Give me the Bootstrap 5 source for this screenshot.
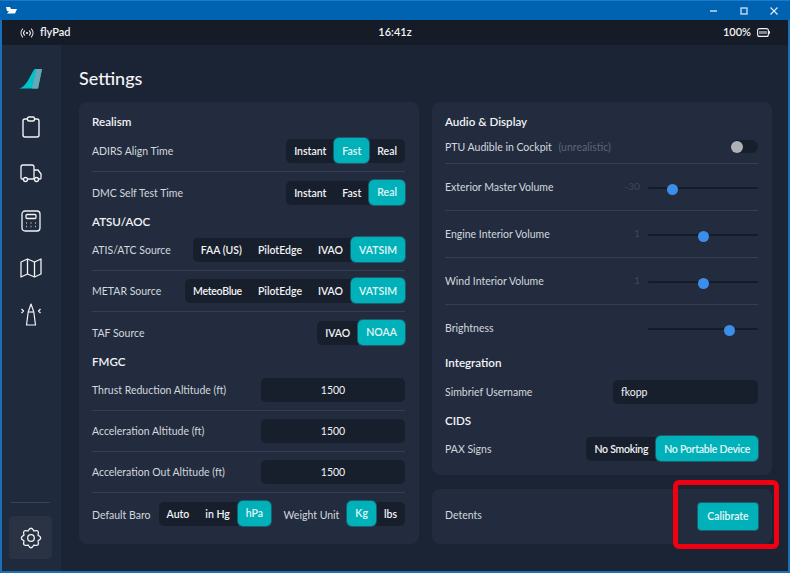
<!DOCTYPE html>
<html lang="en">
<head>
<meta charset="UTF-8">
<title>flyPad Settings</title>
<link href="https://cdn.jsdelivr.net/npm/bootstrap@5.3.0/dist/css/bootstrap.min.css" rel="stylesheet">
<style>
html, body { margin: 0; background: #1b2434; }
body { font-family: "Lato", "Liberation Sans", sans-serif; font-size: 10.5px; color: #d3d7de; overflow: hidden; }
.app-window { width: 790px; height: 573px; border: solid #1a6fb8; border-width: 0 2px 2px 2px; position: relative; }
.title-bar { height: 20px; background: #0063b1; border-top: 1px solid #1c7ac9; margin: 0 -2px; padding: 0 1px 0 6px; }
.win-btn { width: 30px; text-align: center; line-height: 0; }
.status-bar { height: 25px; background: #151b27; padding: 0 18px; color: #f2f3f5; font-size: 11px; font-weight: 600; }
.status-side { width: 200px; gap: 6px; }
.app-body { height: 526px; }
.side-rail { width: 59px; background: #1f2a3c; padding: 23px 2px 0 0; }
.rail-icon { height: 47px; }
.rail-logo { height: 35px; }
.rail-rule { width: 39px; height: 1px; background: #364153; margin-bottom: 13px; }
.rail-tile { width: 43px; height: 43px; background: #293344; border-radius: 4px; margin-bottom: 12px; }
.main-area { padding: 22px 16px 0 18px; }
.page-title { font-size: 18px; font-weight: 500; color: #f4f5f7; margin: 0; line-height: 22px; height: 35px; }
.panel { background: #222c3e; border-radius: 8px; width: 340px; padding: 0 14px 0 13px; }
.panel-left { height: 442px; padding-top: 10px; }
.panel-right { height: 373px; padding-top: 10px; }
.panel-detents { height: 55px; padding-right: 13px; }
.sect-title { font-size: 11.6px; font-weight: 600; color: #f2f3f5; margin: 0; line-height: 1; }
.sect-first { height: 19px; padding-top: 4px; }
.sect-next { height: 17px; padding-top: 3px; }
.set-row { height: 41px; }
.set-line { border-bottom: 1px solid #343f51; }
.audio-row { height: 47px; padding-bottom: 1px; }
.ptu-row { height: 33px; padding-bottom: 1px; }
.cids-row { height: 40px; }
.simbrief-row { height: 41px; }
.integration-head { margin-top: 2px; }
.set-row > span, .audio-row > span, .ptu-row > span:first-child, .simbrief-row > span, .cids-row > span { margin-top: 2px; }
.dim-note { color: #5c6677; }
.seg-group { background: #171e2c; border-radius: 5px; height: 24px; }
.seg-group .btn { font-size: 10.5px; font-weight: 600; color: #f2f3f5; padding: 0 8px; height: 24px; line-height: 24px; border: 0; border-radius: 5px; }
.seg-group .seg-on { background: #00b1b9; color: #e4f7f8; height: 25px; margin-top: -1px; box-shadow: 0 0 0 1px #1a5f6e; }
.seg-group .seg-tight { letter-spacing: -.25px; }
.value-box { background: #171e2c; border: 0; border-radius: 5px; width: 144px; height: 24px; padding: 0 8px; font-size: 10.5px; font-weight: 400; color: #f2f3f5; box-shadow: none; }
.value-box:focus { background: #171e2c; color: #f2f3f5; box-shadow: none; }
.simbrief-row .value-box { width: 145px; }
.slide-value { width: 30px; text-align: right; color: #3d4759; margin-right: 8px; font-size: 10.4px; }
.slide-input { width: 110px; height: 16px; display: block; margin-top: 2px; }
.slide-input::-webkit-slider-runnable-track { height: 2px; background: #151b27; border-radius: 1px; }
.slide-input::-webkit-slider-thumb { width: 11px; height: 11px; margin-top: -3px; background: #3b8eea; border: 0; border-radius: 50%; box-shadow: none; }
.toggle-track { width: 27px; height: 13px; background: #171e2c; border-radius: 7px; }
.toggle-knob { width: 12px; height: 12px; background: #aeb1b8; border-radius: 50%; }
.cal-btn { background: #00b1b9; color: #e8f8f9; font-size: 10.4px; font-weight: 600; width: 62px; height: 29px; padding: 0; border: 1px solid #1a5f6e; border-radius: 4px; }
.detents-name { margin-top: -1px; }
.red-mark { position: absolute; left: 671px; top: 480px; width: 106px; height: 69px; border: 5px solid #f00010; border-radius: 6px; pointer-events: none; }
</style>
</head>
<body>
<div class="app-window">

  <div class="title-bar d-flex align-items-center justify-content-between">
    <svg width="11" height="7" viewBox="0 0 11 7"><path d="M0 0h4l1 2h6L9 6.500H1L3 4H1z" fill="#fff"/></svg>
    <div class="d-flex">
      <span class="win-btn"><svg width="8" height="8" viewBox="0 0 8 8"><path d="M0 4h7" stroke="#cfe3f5" stroke-width="1.4"/></svg></span>
      <span class="win-btn"><svg width="8" height="8" viewBox="0 0 8 8"><rect x="1" y="1" width="6" height="6" fill="none" stroke="#cfe3f5" stroke-width="1.3"/></svg></span>
      <span class="win-btn"><svg width="8" height="8" viewBox="0 0 8 8"><path d="M.5.5l7 7M7.500.5l-7 7" stroke="#e3eef8" stroke-width="1.1"/></svg></span>
    </div>
  </div>

  <div class="status-bar d-flex align-items-center justify-content-between">
    <div class="status-side d-flex align-items-center">
      <svg width="14" height="10" viewBox="0 0 14 10" fill="none" stroke="#f2f3f5" stroke-width="1.1" stroke-linecap="round"><circle cx="7" cy="5" r="1.1" fill="#f2f3f5" stroke="none"/><path d="M4.600 2.800a3.200 3.200 0 0 0 0 4.400M9.400 2.800a3.200 3.200 0 0 1 0 4.400M2.600 1a6 6 0 0 0 0 8M11.400 1a6 6 0 0 1 0 8"/></svg>
      <span>flyPad</span>
    </div>
    <span>16:41z</span>
    <div class="status-side d-flex align-items-center justify-content-end">
      <span>100%</span>
      <svg width="13" height="9" viewBox="0 0 13 9" fill="none"><rect x=".6" y=".6" width="10.800" height="7.800" rx="2" stroke="#f2f3f5" stroke-width="1.1"/><path d="M3 3v3M5 3v3M7 3v3M9 3v3" stroke="#f2f3f5"/><path d="M12.500 3.200v2.600" stroke="#f2f3f5"/></svg>
    </div>
  </div>

  <div class="app-body d-flex">
    <div class="side-rail d-flex flex-column align-items-center">
      <div class="rail-logo d-flex justify-content-center">
        <svg width="23" height="21" viewBox="0 0 23 21"><path d="M0 20.500C8 18.500 10 9 15.500 1H23l-4 19.500z" fill="#00c2c9"/><path d="M17.500 1H23l-4 19.500h-6z" fill="#6ba6b6"/></svg>
      </div>
      <div class="rail-icon d-flex justify-content-center align-items-center">
        <svg width="20" height="22" viewBox="0 0 20 22" fill="none" stroke="#f2f3f5" stroke-width="1.4"><path d="M6.500 3H4a2 2 0 0 0-2 2v14a2 2 0 0 0 2 2h12a2 2 0 0 0 2-2V5a2 2 0 0 0-2-2h-2.500"/><rect x="6.500" y="1" width="7" height="4" rx="1.500"/></svg>
      </div>
      <div class="rail-icon d-flex justify-content-center align-items-center">
        <svg width="22" height="19" viewBox="0 0 22 19" fill="none" stroke="#f2f3f5" stroke-width="1.3" stroke-linejoin="round"><path d="M3.500 15H2a1 1 0 0 1-1-1V3a2 2 0 0 1 2-2h9a2 2 0 0 1 2 2v12H7.500"/><path d="M14 6h4l3 4v4a1 1 0 0 1-1 1h-1.500M14 15h.5"/><circle cx="5.500" cy="15.500" r="2"/><circle cx="16.500" cy="15.500" r="2"/></svg>
      </div>
      <div class="rail-icon d-flex justify-content-center align-items-center">
        <svg width="20" height="22" viewBox="0 0 20 22" fill="none" stroke="#f2f3f5" stroke-width="1.3"><rect x="1" y="1" width="18" height="20" rx="3"/><rect x="5" y="4.500" width="10" height="4" rx="1"/><path d="M5 13h1M9.500 13h1M14 13h1M5 16.500h1M9.500 16.500h1M14 16.500h1" stroke="#aeb4bf"/></svg>
      </div>
      <div class="rail-icon d-flex justify-content-center align-items-center">
        <svg width="22" height="20" viewBox="0 0 22 20" fill="none" stroke="#f2f3f5" stroke-width="1.3" stroke-linejoin="round"><path d="M1 4l6.500-3L14.500 4 21 1v15l-6.500 3-7-3L1 19z"/><path d="M7.500 1v15M14.500 4v15"/></svg>
      </div>
      <div class="rail-icon d-flex justify-content-center align-items-center">
        <svg width="22" height="23" viewBox="0 0 22 23" fill="none" stroke="#f2f3f5" stroke-width="1.2" stroke-linejoin="round"><path d="M11 1l2.800 8 1.700 13h-9L8.200 9z"/><path d="M8.200 9h5.600"/><path d="M1.500 6l2 2-2 2M20.500 6l-2 2 2 2"/></svg>
      </div>
      <div class="flex-grow-1"></div>
      <div class="rail-rule"></div>
      <div class="rail-tile d-flex justify-content-center align-items-center">
        <svg width="22" height="22" viewBox="0 0 22 22" fill="none" stroke="#f2f3f5" stroke-width="1.3" stroke-linejoin="round"><circle cx="11" cy="11" r="3.300"/><path d="M18.020 8.090Q23.500 11 18.020 13.910Q19.840 19.840 13.910 18.020Q11 23.500 8.090 18.020Q2.160 19.840 3.980 13.910Q-1.500 11 3.980 8.090Q2.160 2.160 8.090 3.980Q11-1.500 13.910 3.980Q19.840 2.160 18.020 8.090z"/></svg>
      </div>
    </div>

    <div class="main-area flex-grow-1">
      <h1 class="page-title">Settings</h1>
      <div class="d-flex justify-content-between">

        <div class="panel panel-left">
          <div class="sect-first"><h2 class="sect-title">Realism</h2></div>
          <div class="set-row set-line d-flex align-items-center justify-content-between">
            <span>ADIRS Align Time</span>
            <div class="seg-group d-flex"><button class="btn">Instant</button><button class="btn seg-on">Fast</button><button class="btn">Real</button></div>
          </div>
          <div class="set-row d-flex align-items-center justify-content-between">
            <span>DMC Self Test Time</span>
            <div class="seg-group d-flex"><button class="btn">Instant</button><button class="btn">Fast</button><button class="btn seg-on">Real</button></div>
          </div>
          <div class="sect-next"><h2 class="sect-title">ATSU/AOC</h2></div>
          <div class="set-row set-line d-flex align-items-center justify-content-between">
            <span>ATIS/ATC Source</span>
            <div class="seg-group d-flex"><button class="btn">FAA (US)</button><button class="btn">PilotEdge</button><button class="btn">IVAO</button><button class="btn seg-on">VATSIM</button></div>
          </div>
          <div class="set-row set-line d-flex align-items-center justify-content-between">
            <span>METAR Source</span>
            <div class="seg-group d-flex"><button class="btn seg-tight">MeteoBlue</button><button class="btn">PilotEdge</button><button class="btn">IVAO</button><button class="btn seg-on">VATSIM</button></div>
          </div>
          <div class="set-row d-flex align-items-center justify-content-between">
            <span>TAF Source</span>
            <div class="seg-group d-flex"><button class="btn">IVAO</button><button class="btn seg-on">NOAA</button></div>
          </div>
          <div class="sect-next"><h2 class="sect-title">FMGC</h2></div>
          <div class="set-row set-line d-flex align-items-center justify-content-between">
            <span>Thrust Reduction Altitude (ft)</span>
            <input class="form-control value-box text-center" value="1500">
          </div>
          <div class="set-row set-line d-flex align-items-center justify-content-between">
            <span>Acceleration Altitude (ft)</span>
            <input class="form-control value-box text-center" value="1500">
          </div>
          <div class="set-row set-line d-flex align-items-center justify-content-between">
            <span>Acceleration Out Altitude (ft)</span>
            <input class="form-control value-box text-center" value="1500">
          </div>
          <div class="set-row d-flex align-items-center justify-content-between">
            <div class="d-flex align-items-center gap-2">
              <span class="mt-1">Default Baro</span>
              <div class="seg-group d-flex"><button class="btn">Auto</button><button class="btn">in Hg</button><button class="btn seg-on">hPa</button></div>
            </div>
            <div class="d-flex align-items-center gap-2">
              <span class="mt-1">Weight Unit</span>
              <div class="seg-group d-flex"><button class="btn seg-on">Kg</button><button class="btn">lbs</button></div>
            </div>
          </div>
        </div>

        <div class="d-flex flex-column justify-content-between">
          <div class="panel panel-right">
            <div class="sect-first"><h2 class="sect-title">Audio &amp; Display</h2></div>
            <div class="ptu-row set-line d-flex align-items-center justify-content-between">
              <span>PTU Audible in Cockpit <span class="dim-note ms-1">(unrealistic)</span></span>
              <span class="toggle-track d-flex align-items-center"><span class="toggle-knob"></span></span>
            </div>
            <div class="audio-row set-line d-flex align-items-center justify-content-between">
              <span>Exterior Master Volume</span>
              <div class="d-flex align-items-center"><span class="slide-value">-30</span><input type="range" class="form-range slide-input" min="0" max="100" value="19"></div>
            </div>
            <div class="audio-row set-line d-flex align-items-center justify-content-between">
              <span>Engine Interior Volume</span>
              <div class="d-flex align-items-center"><span class="slide-value">1</span><input type="range" class="form-range slide-input" min="0" max="100" value="50"></div>
            </div>
            <div class="audio-row set-line d-flex align-items-center justify-content-between">
              <span>Wind Interior Volume</span>
              <div class="d-flex align-items-center"><span class="slide-value">1</span><input type="range" class="form-range slide-input" min="0" max="100" value="50"></div>
            </div>
            <div class="audio-row d-flex align-items-center justify-content-between">
              <span>Brightness</span>
              <input type="range" class="form-range slide-input" min="0" max="100" value="77">
            </div>
            <div class="sect-next integration-head"><h2 class="sect-title">Integration</h2></div>
            <div class="simbrief-row d-flex align-items-center justify-content-between">
              <span>Simbrief Username</span>
              <input class="form-control value-box" value="fkopp">
            </div>
            <div class="sect-next"><h2 class="sect-title">CIDS</h2></div>
            <div class="cids-row d-flex align-items-center justify-content-between">
              <span>PAX Signs</span>
              <div class="seg-group d-flex"><button class="btn seg-tight">No Smoking</button><button class="btn seg-on seg-tight">No Portable Device</button></div>
            </div>
          </div>
          <div class="panel panel-detents d-flex align-items-center justify-content-between">
            <span class="detents-name">Detents</span>
            <button class="btn cal-btn">Calibrate</button>
          </div>
        </div>

      </div>
    </div>
  </div>
  <div class="red-mark"></div>
</div>
<script src="https://cdn.jsdelivr.net/npm/bootstrap@5.3.0/dist/js/bootstrap.bundle.min.js"></script>
</body>
</html>
